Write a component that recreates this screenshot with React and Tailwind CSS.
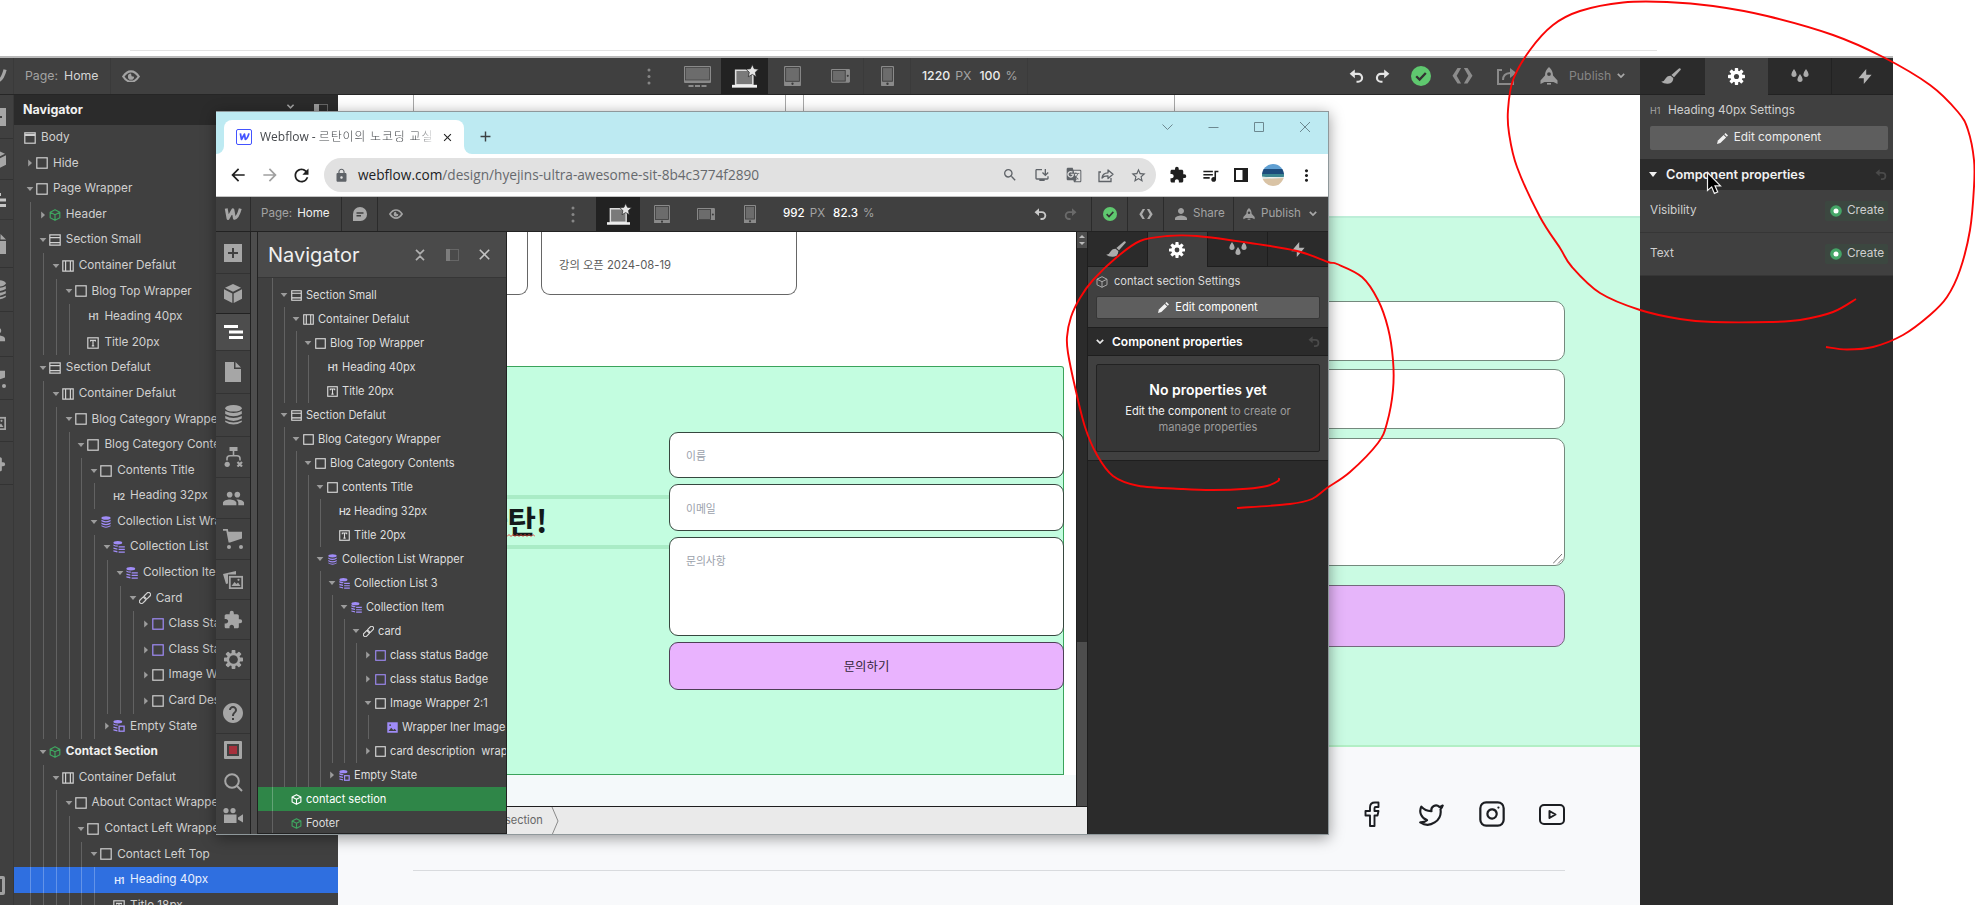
import React from "react";
import {
  MdArrowBack,
  MdArrowForward,
  MdRefresh,
  MdLock,
  MdSearch,
  MdOutlineInstallDesktop,
  MdGTranslate,
  MdStarBorder,
  MdExtension,
  MdQueueMusic,
  MdMoreVert,
  MdClose,
  MdAdd,
  MdPeople,
  MdHelp,
  MdPerson,
  MdUnfoldLess,
} from "react-icons/md";
import { Twitter, Instagram } from "lucide-react";

/* ---------- tree data ---------- */
// [depth, icon, label, arrow, mark]
const outerTree = [
  [-1, "body", "Body", ""],
  [0, "box", "Hide", "right"],
  [0, "box", "Page Wrapper", "down"],
  [1, "cube", "Header", "right"],
  [1, "section", "Section Small", "down"],
  [2, "container", "Container Defalut", "down"],
  [3, "box", "Blog Top Wrapper", "down"],
  [4, "h1", "Heading 40px", ""],
  [4, "text", "Title 20px", ""],
  [1, "section", "Section Defalut", "down"],
  [2, "container", "Container Defalut", "down"],
  [3, "box", "Blog Category Wrapper", "down"],
  [4, "box", "Blog Category Contents", "down"],
  [5, "box", "Contents Title", "down"],
  [6, "h2", "Heading 32px", ""],
  [5, "db", "Collection List Wrapper", "down"],
  [6, "list", "Collection List", "down"],
  [7, "list", "Collection Item", "down"],
  [8, "link", "Card", "down"],
  [9, "pbox", "Class Status Badge", "right"],
  [9, "pbox", "Class Status Badge", "right"],
  [9, "box", "Image Wrapper", "right"],
  [9, "box", "Card Description", "right"],
  [6, "empty", "Empty State", "right"],
  [1, "cube", "Contact Section", "down", "bold"],
  [2, "container", "Container Defalut", "down"],
  [3, "box", "About Contact Wrapper", "down"],
  [4, "box", "Contact Left Wrapper", "down"],
  [5, "box", "Contact Left Top", "down"],
  [6, "h1", "Heading 40px", "", "blue"],
  [6, "text", "Title 18px", ""],
];

const innerTree = [
  [1, "section", "Section Small", "down"],
  [2, "container", "Container Defalut", "down"],
  [3, "box", "Blog Top Wrapper", "down"],
  [4, "h1", "Heading 40px", ""],
  [4, "text", "Title 20px", ""],
  [1, "section", "Section Defalut", "down"],
  [2, "box", "Blog Category Wrapper", "down"],
  [3, "box", "Blog Category Contents", "down"],
  [4, "box", "contents Title", "down"],
  [5, "h2", "Heading 32px", ""],
  [5, "text", "Title 20px", ""],
  [4, "db", "Collection List Wrapper", "down"],
  [5, "list", "Collection List 3", "down"],
  [6, "list", "Collection Item", "down"],
  [7, "link", "card", "down"],
  [8, "pbox", "class status Badge", "right"],
  [8, "pbox", "class status Badge", "right"],
  [8, "box", "Image Wrapper 2:1", "down"],
  [9, "image", "Wrapper Iner Image", ""],
  [8, "box", "card description  wrap", "right"],
  [5, "empty", "Empty State", "right"],
  [1, "cube", "contact section", "", "green"],
  [1, "cube", "Footer", ""],
];

/* ---------- icons ---------- */
function NodeIcon({ type, size, active }) {
  if (type === "h1" || type === "h2") {
    return (
      <span className="text-[9px] leading-none font-semibold tracking-[-0.4px] text-center" style={{ width: size }}>
        {type === "h1" ? "H1" : "H2"}
      </span>
    );
  }
  const purple = "#a08cf8";
  const green = active ? "#ffffff" : "#3fa660";
  return (
    <svg width={size} height={size} viewBox="0 0 12 12" fill="none" stroke="currentColor" strokeWidth="1.2" className="shrink-0">
      {type === "box" && <rect x="0.8" y="0.8" width="10.4" height="10.4" />}
      {type === "pbox" && <rect x="0.8" y="0.8" width="10.4" height="10.4" stroke={purple} />}
      {type === "body" && (
        <>
          <rect x="0.8" y="0.8" width="10.4" height="10.4" />
          <path d="M0.8 2.4h10.4M0.8 3.4h10.4" strokeWidth="1.4" />
        </>
      )}
      {type === "section" && <path d="M0.8 0.8h10.4v10.4H0.8zM0.8 3.6h10.4M0.8 8.6h10.4" />}
      {type === "container" && <path d="M0.8 0.8h10.4v10.4H0.8zM3.6 0.8v10.4M8.4 0.8v10.4" />}
      {type === "text" && (
        <>
          <rect x="0.8" y="0.8" width="10.4" height="10.4" />
          <path d="M3.6 4.6v-1.3h4.8v1.3M6 3.3v5.6M4.8 8.9h2.4" />
        </>
      )}
      {type === "cube" && (
        <path d="M6 0.7l4.8 2.5v5.6L6 11.3 1.2 8.8V3.2zM1.2 3.2L6 5.7l4.8-2.5M6 5.7v5.6" stroke={green} strokeLinejoin="round" />
      )}
      {type === "db" && (
        <g fill={purple} stroke="none">
          <ellipse cx="6" cy="2" rx="4.6" ry="1.8" />
          <path d="M1.4 3.8q4.6 2.8 9.2 0v1.5q-4.6 2.6-9.2 0zM1.4 6.6q4.6 2.8 9.2 0v1.4q-4.6 2.6-9.2 0zM1.4 9.3q4.6 2.8 9.2 0v.9q-4.6 2.9-9.2 0z" />
        </g>
      )}
      {(type === "list" || type === "empty") && (
        <g fill={purple} stroke="none">
          <ellipse cx="4.8" cy="1.8" rx="4.4" ry="1.7" />
          <path d="M0.4 3.4q2 1.2 4.4 1.2v1.2q-2.6 0-4.4-1zM0.4 6.4l4 1v1.4l-4-1zM0.4 9.2l4 .8v1.4l-4-1z" />
          {type === "list" ? (
            <path d="M5.6 5.2h6.2v1.3H5.6zM5.6 7.8h6.2v1.3H5.6zM5.6 10.4h6.2v1.3H5.6z" />
          ) : (
            <rect x="6.1" y="6.2" width="5" height="5" fill="none" stroke={purple} strokeWidth="1.3" />
          )}
        </g>
      )}
      {type === "link" && (
        <g transform="rotate(-45 6 6)" strokeWidth="1.2">
          <rect x="-1" y="3.9" width="7.6" height="4.2" rx="2.1" />
          <rect x="5.4" y="3.9" width="7.6" height="4.2" rx="2.1" />
        </g>
      )}
      {type === "image" && (
        <>
          <rect x="0.3" y="0.3" width="11.4" height="11.4" fill={purple} stroke="none" />
          <path d="M1.6 9.8l3-3.6 2.2 2.4 1.6-1.2 2 2.4z" fill="#404040" stroke="none" />
          <circle cx="3.4" cy="3.4" r="1" fill="#404040" stroke="none" />
        </>
      )}
    </svg>
  );
}

function Arrow({ dir }) {
  return (
    <svg width="8" height="8" viewBox="0 0 8 8" className="-ml-1 shrink-0" fill="#9c9c9c">
      {dir === "down" && <path d="M0.6 2h6.8L4 6z" />}
      {dir === "right" && <path d="M2.2 0.6v6.8L6 4z" />}
    </svg>
  );
}

function WLogo({ width = 18, color = "#a6a6a6" }) {
  return (
    <svg width={width} height={width * 0.72} viewBox="0 0 18 13" fill="none" stroke={color} className="shrink-0">
      <path d="M2.2 0.6L4 10.600 8.900 1.800 10.400 10.400Q14 9.500 16.300 0.600" strokeWidth="2.900" strokeLinejoin="round" />
    </svg>
  );
}

function Eye({ size = 14 }) {
  return (
    <svg width={size} height={size * 0.72} viewBox="0 0 18 13" fill="none">
      <path d="M1.200 6.500Q4.500 1.300 9 1.300t7.800 5.200Q13.500 11.700 9 11.700T1.200 6.500z" stroke="#a3a3a3" strokeWidth="2.200" />
      <path d="M9 3.600a3.100 3.100 0 1 0 3.100 3.100L9.600 6.200z" fill="#a3a3a3" />
    </svg>
  );
}

function Undo({ size = 14, color = "#c9c9c9", flip = false }) {
  return (
    <svg width={size} height={size} viewBox="0 0 14 14" fill="none" stroke={color} strokeWidth="2" className={flip ? "-scale-x-100" : ""}>
      <path d="M2.500 4.500h6a3.700 3.700 0 0 1 0 7.400H7" />
      <path d="M5.400 0.400v8.200L0.600 4.500z" fill={color} stroke="none" />
    </svg>
  );
}

function Laptop({ w = 24 }) {
  return (
    <svg width={w} height={w} viewBox="0 0 24 24" className="overflow-visible">
      <path d="M3.500 6h16.500v14H3.500z" fill="#7a7a7a" stroke="#dcdcdc" strokeWidth="1.500" />
      <path d="M0 20h24v2.700H0z" fill="#efefef" />
      <path
        d="M19.500 0.500l1.800 4 4.300.5-3.200 2.900.9 4.300-3.800-2.200-3.800 2.200.9-4.300-3.200-2.900 4.300-.5z"
        fill="#e6e6e6"
        stroke="#222"
        strokeWidth="0.700"
      />
    </svg>
  );
}

function Tablet({ w = 16 }) {
  return (
    <svg width={w} height={w * 1.18} viewBox="0 0 16 19">
      <rect width="16" height="19" rx="1" fill="#8a8a8a" />
      <rect x="1.500" y="1.500" width="13" height="13" fill="#6c6c6c" stroke="#3b3b3b" strokeWidth="0.800" />
      <circle cx="8" cy="16.800" r="1.100" fill="#3b3b3b" />
    </svg>
  );
}

function Landscape({ w = 18 }) {
  return (
    <svg width={w} height={w * 0.72} viewBox="0 0 18 13">
      <rect width="18" height="13" rx="1" fill="#8a8a8a" />
      <rect x="1.500" y="1.500" width="12" height="10" fill="#6c6c6c" stroke="#3b3b3b" strokeWidth="0.800" />
      <circle cx="15.900" cy="6.500" r="1" fill="#3b3b3b" />
    </svg>
  );
}

function Phone({ w = 12 }) {
  return (
    <svg width={w} height={w * 1.55} viewBox="0 0 12 18.500">
      <rect width="12" height="18.500" rx="1" fill="#8a8a8a" />
      <rect x="1.500" y="1.500" width="9" height="12.500" fill="#6c6c6c" stroke="#3b3b3b" strokeWidth="0.800" />
      <circle cx="6" cy="16.300" r="1.100" fill="#3b3b3b" />
    </svg>
  );
}

function Desktop() {
  return (
    <svg width="27" height="21" viewBox="0 0 27 21">
      <rect width="27" height="17" rx="1" fill="#8a8a8a" />
      <rect x="1.500" y="1.500" width="24" height="12.500" fill="#6c6c6c" stroke="#444" strokeWidth="0.800" />
      <path d="M4.500 20h5M11 20h5M17.500 20h5" stroke="#8a8a8a" strokeWidth="2" />
    </svg>
  );
}

function Check({ size = 14 }) {
  return (
    <svg width={size} height={size} viewBox="0 0 20 20">
      <circle cx="10" cy="10" r="10" fill="#5fc86f" />
      <path d="M5.200 10.200l3.400 3.400 6.200-6.600" fill="none" stroke="#333" strokeWidth="2.300" />
    </svg>
  );
}

function Code({ w = 15, color = "#ababab" }) {
  return (
    <svg width={w} height={w * 0.74} viewBox="0 0 21 15.500" fill={color}>
      <path d="M5.500 0h3.600L4.700 7.700l4.400 7.800H5.500L0.500 7.700zM15.500 0h-3.600l4.400 7.700-4.400 7.800h3.600l5-7.800z" />
    </svg>
  );
}

function Rocket({ w = 12 }) {
  return (
    <svg width={w} height={w} viewBox="0 0 18 18" fill="#9b9b9b">
      <path fillRule="evenodd" d="M9 0c3 2.500 3.800 5 4 8.500l4.500 5V17l-4-2H4.500l-4 2v-3.500l4.500-5C5.200 5 6 2.500 9 0zm0 5.200a1.900 1.900 0 1 0 0 3.800 1.900 1.900 0 0 0 0-3.800z" />
      <path d="M7 16h4v1.600H7z" />
    </svg>
  );
}

function Chevron({ w = 8, color = "#a8a8a8" }) {
  return (
    <svg width={w} height={w * 0.65} viewBox="0 0 8 5.200" fill="none" stroke={color} strokeWidth="1.700">
      <path d="M0.800 0.800L4 4l3.200-3.200" />
    </svg>
  );
}

function Dots() {
  return (
    <svg width="4" height="17" viewBox="0 0 4 17" fill="#868686">
      <circle cx="2" cy="2" r="1.500" />
      <circle cx="2" cy="8.500" r="1.500" />
      <circle cx="2" cy="15" r="1.500" />
    </svg>
  );
}

function Brush({ size = 20 }) {
  return (
    <svg width={size} height={size * 0.8} viewBox="0 0 20 16" fill="#ababab">
      <path d="M18.200 0.200q2 0 1.500 1.600L13 9.200l-2.600-2.300z" />
      <path d="M9.600 7.700l2.700 2.400q.2 5.400-5.400 5.600-4.200.2-6.700-2 3-.1 4-2.600 1.700-3.400 5.400-3.400z" />
    </svg>
  );
}

function Gear({ size = 16, color = "#fff", hole = 3 }) {
  const teeth = [0, 45, 90, 135];
  return (
    <svg width={size} height={size} viewBox="-10 -10 20 20" fill={color}>
      {teeth.map((t) => (
        <rect key={t} x="-2" y="-10" width="4" height="20" rx="0.800" transform={`rotate(${t})`} />
      ))}
      <circle r="7.200" />
      <circle r={hole} fill="#404040" />
    </svg>
  );
}

function Drops() {
  return (
    <svg width="18" height="14" viewBox="0 0 18 14" fill="#ababab">
      <path d="M3 0q2.600 3.500 2.600 5.300a2.600 2.600 0 0 1-5.200 0Q0.400 3.500 3 0zM9 5q2.600 3.500 2.600 5.300a2.600 2.600 0 0 1-5.200 0Q6.400 8.500 9 5zM15 0q2.600 3.500 2.600 5.300a2.600 2.600 0 0 1-5.200 0Q12.400 3.500 15 0z" />
    </svg>
  );
}

function Bolt() {
  return (
    <svg width="14" height="15" viewBox="0 0 14 15" fill="#b5b5b5">
      <path d="M8.200 0v5.700H13.600L5.800 15V9.200H0.400z" />
    </svg>
  );
}

function Pencil() {
  return (
    <svg width="11" height="11" viewBox="0 0 11 11" fill="#f2f2f2">
      <path d="M0 11l.9-3.400L6.600 1.900l2.500 2.500L3.400 10.100z" />
      <path d="M7.300 1.200L8.500 0 11 2.500 9.800 3.700z" />
    </svg>
  );
}

/* Left toolbar glyphs, shared by both designer windows */
const railIcons = {
  add: (
    <svg width="18" height="18" viewBox="0 0 18 18">
      <rect width="18" height="18" fill="#a6a6a6" />
      <path d="M9 4v10M4 9h10" stroke="#404040" strokeWidth="2" />
    </svg>
  ),
  cube: (
    <svg width="18" height="19" viewBox="0 0 18 19" fill="#a6a6a6">
      <path d="M9 0l8 3.800-8 4-8-4zM0 5.300l8.300 4.200V19L0 14.800zM18 5.300L9.700 9.500V19l8.300-4.200z" />
    </svg>
  ),
  nav: (
    <svg width="19" height="14" viewBox="0 0 19 14" fill="#fff">
      <path d="M0 0h14v3H0zM5 5.500h14v3H5zM5 11h14v3H5z" />
    </svg>
  ),
  page: (
    <svg width="16" height="20" viewBox="0 0 16 20" fill="#a6a6a6">
      <path d="M0 0h9v7h7v13H0zM10.500 0L16 5.500h-5.500z" />
    </svg>
  ),
  db: (
    <svg width="17" height="20" viewBox="0 0 17 20" fill="#a6a6a6">
      <ellipse cx="8.500" cy="3.300" rx="8.300" ry="3.300" />
      <path d="M.2 6q8.300 4 16.600 0v3q-8.300 4.600-16.600 0zM.2 11q8.300 4 16.600 0v2.600q-8.300 4.600-16.600 0zM.2 15.500q8.300 4 16.600 0v1.500q-8.300 5-16.600 0z" />
    </svg>
  ),
  tree: (
    <svg width="19" height="20" viewBox="0 0 19 20" fill="none" stroke="#a6a6a6" strokeWidth="1.600">
      <path d="M5.500 0h8v4h-8z" fill="#a6a6a6" stroke="none" />
      <path d="M9.500 4v5M3 13.500v-2q0-2.700 3-2.700h7q3 0 3 2.700v2" />
      <circle cx="3.200" cy="17.300" r="2.600" fill="#a6a6a6" stroke="none" />
      <path d="M13.500 15l4.500 4.500M18 15l-4.500 4.500" strokeWidth="2.200" />
    </svg>
  ),
  people: <MdPeople size={23} color="#a6a6a6" />,
  cart: (
    <svg width="20" height="20" viewBox="0 0 20 20" fill="#a6a6a6">
      <path d="M0 0h4.800l.6 2.800H19v6.700L7 13.500H5.600L3.300 1.800H0z" />
      <circle cx="6" cy="18" r="2" />
      <circle cx="18" cy="18" r="2" />
    </svg>
  ),
  images: (
    <svg width="20" height="18" viewBox="0 0 20 18">
      <path d="M0 3l13-3v3.500H5v9l-2 .5z" fill="#a6a6a6" />
      <rect x="6.800" y="5.800" width="12.400" height="11.400" fill="none" stroke="#a6a6a6" strokeWidth="1.800" />
      <path d="M8.500 15l3-4 2 2 1.500-1.500 2.500 3.500z" fill="#a6a6a6" />
      <circle cx="15.500" cy="8.800" r="1.100" fill="#a6a6a6" />
    </svg>
  ),
  puzzle: <MdExtension size={20} color="#a6a6a6" />,
  gear: <Gear size={19} color="#a6a6a6" hole={4.6} />,
};

/* ---------- shared pieces ---------- */
function Tree({ rows, large }) {
  const step = large ? 12.85 : 12;
  return rows.map(([depth, icon, label, arrow, mark], i) => (
    <div
      key={i}
      className={`flex items-center shrink-0 whitespace-pre overflow-hidden ${
        large ? "h-[25.6px] pl-4 text-[11.75px] text-[#d0d0d0]" : "h-6 pl-[14px] text-[11.05px] text-[#dedede]"
      } ${mark === "blue" ? "bg-[#2f6fe0] text-[#e8f0ff]" : ""} ${mark === "green" ? "bg-[#2f8648] text-white" : ""}`}
    >
      {Array.from({ length: Math.max(depth, 0) }, (_, g) => (
        <span
          key={g}
          className={`self-stretch shrink-0 border-l ${mark === "blue" || mark === "green" ? "border-white/25" : "border-[#626262]"}`}
          style={{ width: step }}
        />
      ))}
      <span className="flex items-center" style={{ marginLeft: depth < 0 ? -12 : 0 }}>
        <Arrow dir={arrow} />
        <span className={`flex items-center ${large ? "ml-[2px] mr-[5px]" : "ml-[3px] mr-1"}`}>
          <NodeIcon type={icon} size={large ? 12 : 11} active={mark === "green"} />
        </span>
        <span className={mark === "bold" ? "font-bold text-[#f0f0f0]" : ""}>{label}</span>
      </span>
    </div>
  ));
}

function Rail({ cells, className }) {
  return cells.map(([name, cls]) => (
    <div key={name} className={`flex items-center shrink-0 border-b border-[#333] ${className} ${cls}`}>
      <span className="shrink-0">{railIcons[name]}</span>
    </div>
  ));
}

/* ---------- background designer ---------- */
function OuterTopBar() {
  return (
    <div className="flex h-[37px] shrink-0 items-stretch border-b border-[#262626] bg-[#404040] text-[12.3px] text-[#a3a3a3] [&>div]:flex [&>div]:items-center">
      <div className="w-[14px] justify-end overflow-hidden border-r border-[#3a3a3a] pr-[6px]">
        <WLogo width={20} />
      </div>
      <div className="w-[97px] gap-[6px] border-r border-[#3a3a3a] pl-[11px]">
        Page: <span className="text-[#d6d6d6]">Home</span>
      </div>
      <div className="w-[39px] justify-center">
        <Eye size={18} />
      </div>
      <div className="ml-[487px] w-6 justify-center">
        <Dots />
      </div>
      <div className="ml-3 w-12 justify-center">
        <Desktop />
      </div>
      <div className="w-[47px] justify-center bg-[#222]">
        <Laptop w={25} />
      </div>
      <div className="w-[49px] justify-center">
        <Tablet w={17} />
      </div>
      <div className="w-[46px] justify-center">
        <Landscape w={19} />
      </div>
      <div className="w-12 justify-center border-x border-[#3b3b3b]">
        <Phone w={13} />
      </div>
      <div className="w-[117px] gap-[5px] border-r border-[#3b3b3b] pl-[11px]">
        <span className="font-medium text-[#ececec]">1220</span>PX
        <span className="ml-[3px] font-medium text-[#ececec]">100</span>%
      </div>
      <div className="ml-auto w-[26px] justify-center">
        <Undo size={15} color="#e4e4e4" />
      </div>
      <div className="w-[31px] pl-[6px]">
        <Undo size={15} color="#e4e4e4" flip />
      </div>
      <div className="w-[41px] justify-center">
        <Check size={20} />
      </div>
      <div className="w-[43px] justify-center">
        <Code w={21} color="#8c8c8c" />
      </div>
      <div className="w-[45px] justify-center">
        <svg width="20" height="17" viewBox="0 0 20 17" fill="none" stroke="#8a8a8a" strokeWidth="2">
          <path d="M5 2H1v14h15v-4" />
          <path d="M6 12q0-6.500 7-7" />
          <path d="M13 0l6.500 5-6.500 5z" fill="#8a8a8a" stroke="none" />
        </svg>
      </div>
      <div className="w-[111px] pl-[11px] text-[#858585]">
        <Rocket w={18} />
        <span className="ml-[11px]">Publish</span>
        <span className="ml-[6px]">
          <Chevron />
        </span>
      </div>
    </div>
  );
}

function OuterNavigator() {
  return (
    <div className="flex shrink-0 overflow-hidden">
      <div className="w-[14px] overflow-hidden border-r border-[#383838] bg-[#404040]">
        <Rail
          className="w-[14px] justify-end pr-2"
          cells={[
            ["add", "h-[44px]"],
            ["cube", "h-[41px]"],
            ["nav", "h-[40px] opacity-70"],
            ["page", "h-[48px]"],
            ["db", "h-[44px]"],
            ["people", "h-[45px]"],
            ["cart", "h-[43px]"],
            ["images", "h-[42px]"],
            ["puzzle", "h-[43px]"],
          ]}
        />
        <div className="mt-[391px] ml-[-14px] h-[19px] w-[19px] rounded-[2px] border-[3px] border-[#a0a0a0] bg-[#404040]" />
      </div>
      <div className="w-[324px] overflow-hidden bg-[#404040]">
        <div className="flex h-[30px] items-center bg-[#2b2b2b] pr-[10px] pl-[9px]">
          <span className="text-[12.5px] font-bold text-[#f2f2f2]">Navigator</span>
          <MdUnfoldLess size={19} className="mr-[14px] ml-auto" color="#a3a3a3" />
          <svg width="14" height="12" viewBox="0 0 14 12">
            <rect x="0.500" y="0.500" width="13" height="11" fill="none" stroke="#666" />
            <rect width="5" height="12" fill="#9a9a9a" />
          </svg>
        </div>
        <div className="flex flex-col">
          <Tree rows={outerTree} large />
        </div>
      </div>
    </div>
  );
}

function FooterIcons() {
  return (
    <div className="flex items-center justify-end pr-[75px] text-[#1c1e22]">
      <svg width="16" height="26" viewBox="0 0 16 26" fill="none" stroke="currentColor" strokeWidth="1.900" strokeLinejoin="round">
        <path d="M14.500 1.500H11Q6 1.500 6 6.500V10H1.500v4.500H6V25h4.500V14.500h3l1-4.500h-4V7.200q0-1.200 1.200-1.200h2.800z" />
      </svg>
      <Twitter size={27} strokeWidth={1.9} className="ml-[38px]" />
      <Instagram size={28} strokeWidth={1.9} className="ml-[33px]" />
      <svg width="26" height="21" viewBox="0 0 26 21" fill="none" stroke="currentColor" strokeWidth="2" strokeLinejoin="round" className="ml-[33px]">
        <rect x="1" y="1" width="24" height="19" rx="4" />
        <path d="M10.500 7l6 3.500-6 3.500z" />
      </svg>
    </div>
  );
}

function OuterCanvas() {
  return (
    <div className="flex flex-1 flex-col bg-white">
      <div className="flex h-[121px] items-start [&>div]:h-full [&>div]:border-[#a8a8a8]">
        <div className="ml-[75px] w-[373px] border-x" />
        <div className="ml-[17px] w-[372px] border-x" />
      </div>
      <div className="flex h-[531px] flex-col items-end border-t-2 border-b-2 border-t-[#bdeed8] border-b-[#b2efc5] bg-[#cafbe3] pr-[75px] pt-[83px]">
        <div className="h-[60px] w-[600px] rounded-[10px] border border-[#74897d] bg-white" />
        <div className="mt-2 h-[60px] w-[600px] rounded-[10px] border border-[#74897d] bg-white" />
        <div className="mt-[9px] flex h-[128px] w-[600px] items-end justify-end rounded-[10px] border border-[#74897d] bg-white p-px">
          <svg width="10" height="10" viewBox="0 0 10 10" stroke="#777">
            <path d="M0 9.500L9 0M5 9.500L9.500 5" />
          </svg>
        </div>
        <div className="mt-[19px] h-[62px] w-[600px] rounded-[10px] border border-[#74697d] bg-[#e6b5fa]" />
      </div>
      <div className="flex-1 bg-[#f8f9fb] pt-[53px]">
        <FooterIcons />
        <div className="mt-[42px] mr-[75px] ml-[75px] h-px bg-[#d9dbde]" />
      </div>
    </div>
  );
}

function OuterPanel() {
  return (
    <div className="flex w-[253px] shrink-0 flex-col bg-[#2b2b2b] text-[#cfcfcf]">
      <div className="flex h-[37px] [&>div]:flex [&>div]:items-center [&>div]:justify-center [&>div]:border-[#222]">
        <div className="w-[65px] border-b pr-1">
          <Brush />
        </div>
        <div className="w-[63px] bg-[#404040] pr-px">
          <Gear size={17} />
        </div>
        <div className="w-[64px] border-r border-b">
          <Drops />
        </div>
        <div className="flex-1 border-b pl-1">
          <Bolt />
        </div>
      </div>
      <div className="h-[64px] bg-[#404040] pr-[5px] pl-[10px]">
        <div className="flex h-[31px] items-center text-[11.8px]">
          <span className="w-[18px] text-[9px] text-[#a5a5a5]">H1</span>
          Heading 40px Settings
        </div>
        <div className="flex h-6 items-center justify-center gap-[6px] rounded-[2px] bg-[#5e5e5e] text-[11.8px] text-[#ededed]">
          <Pencil />
          Edit component
        </div>
      </div>
      <div className="flex h-[31px] items-center bg-[#2b2b2b] pr-[6px] pl-[9px]">
        <svg width="8" height="5" viewBox="0 0 8 5" fill="#f0f0f0">
          <path d="M0 0h8L4 5z" />
        </svg>
        <span className="ml-[9px] text-[12.75px] font-semibold text-[#f2f2f2]">Component properties</span>
        <span className="ml-auto">
          <Undo size={12} color="#4a4a4a" />
        </span>
      </div>
      {["Visibility", "Text"].map((label) => (
        <div key={label} className="flex h-[43px] items-center justify-between border-b border-[#363636] bg-[#404040] pr-[5px] pl-[10px] text-[11.8px]">
          {label}
          <span className="flex h-5 w-[63px] items-center gap-[5px] rounded-[2px] bg-[#3c4740] pl-[5px]">
            <svg width="12" height="12" viewBox="0 0 12 12">
              <circle cx="6" cy="6" r="5.800" fill="#45a567" />
              <circle cx="6" cy="6" r="2.500" fill="#fff" />
            </svg>
            Create
          </span>
        </div>
      ))}
    </div>
  );
}

/* ---------- browser window in front ---------- */
function BrowserChrome() {
  return (
    <>
      <div className="flex h-[42px] shrink-0 bg-[#bdeaf2]">
        <span className="h-2 w-2 self-end bg-white">
          <span className="block h-2 w-2 rounded-br-lg bg-[#bdeaf2]" />
        </span>
        <div className="mt-2 flex w-[240px] items-center rounded-t-lg bg-white pl-3 font-['Open_Sans','Noto_Sans_CJK_KR',sans-serif]">
          <span className="flex h-4 w-4 shrink-0 items-center justify-center rounded-[2px] border border-[#4353ff]">
            <WLogo width={11} color="#4353ff" />
          </span>
          <span className="ml-2 w-[177px] overflow-hidden text-[12px] whitespace-nowrap text-[#45484c] [mask-image:linear-gradient(to_right,black_88%,transparent)]">
            Webflow - <span className="font-light tracking-[0.8px]">르탄이의 노코딩 교실</span>
          </span>
          <MdClose size={13} className="ml-1 shrink-0" color="#222" />
        </div>
        <span className="h-2 w-2 self-end bg-white">
          <span className="block h-2 w-2 rounded-bl-lg bg-[#bdeaf2]" />
        </span>
        <MdAdd size={17} className="mt-[16px] ml-[5px]" color="#3c4043" />
        <svg width="150" height="12" viewBox="0 0 150 12" fill="none" stroke="#6d8890" className="mt-[9px] mr-[17px] ml-auto">
          <path d="M1.500 3.500l5 5 5-5" />
          <path d="M47.500 6.500h10" />
          <path d="M93.500 1.500h9v9h-9z" />
          <path d="M139 1l10 10M149 1l-10 10" />
        </svg>
      </div>
      <div className="flex h-[43px] shrink-0 items-center border-b border-[#c4c4c4] bg-white font-['Open_Sans',sans-serif]">
        <MdArrowBack size={20} className="ml-3" color="#1f1f1f" />
        <MdArrowForward size={20} className="ml-3" color="#a0a0a0" />
        <MdRefresh size={21} className="ml-[11px]" color="#1f1f1f" />
        <div className="ml-3 flex h-[34px] w-[832px] items-center rounded-full bg-[#e1e1e1] pl-[10px]">
          <MdLock size={15} color="#5f6368" />
          <span className="ml-[9px] text-[13.65px] text-[#66696d]">
            <span className="text-[#202124]">webflow.com</span>/design/hyejins-ultra-awesome-sit-8b4c3774f2890
          </span>
          <span className="mr-[9px] ml-auto flex items-center gap-4 text-[#5f6368]">
            <MdSearch size={16} />
            <MdOutlineInstallDesktop size={16} />
            <MdGTranslate size={16} />
            <svg width="16" height="16" viewBox="0 0 16 16" fill="none" stroke="currentColor" strokeWidth="1.300">
              <path d="M3 5H1v9.500h12V11" />
              <path d="M4 11q.5-5 6-5.200V3l5 4.300-5 4.300V8.800Q6 8.600 4 11z" strokeLinejoin="round" />
            </svg>
            <MdStarBorder size={17} />
          </span>
        </div>
        <div className="flex items-center gap-[14px] pl-[13px]">
          <MdExtension size={18} color="#1f1f1f" />
          <MdQueueMusic size={19} color="#1f1f1f" />
          <svg width="14" height="14" viewBox="0 0 14 14">
            <rect x="1" y="1" width="12" height="12" fill="none" stroke="#1f1f1f" strokeWidth="2" />
            <rect x="8.500" width="5.500" height="14" fill="#1f1f1f" />
          </svg>
          <svg width="22" height="22" viewBox="0 0 22 22">
            <clipPath id="avatar">
              <circle cx="11" cy="11" r="11" />
            </clipPath>
            <g clipPath="url(#avatar)">
              <path d="M0 0h22v6H0z" fill="#5f9fd2" />
              <path d="M0 5h22v6H0z" fill="#1d4c7c" />
              <path d="M0 10h22v3H0z" fill="#3d8791" />
              <path d="M0 12.500l8 1 14-.5v3H0z" fill="#dfe8e4" />
              <path d="M0 15l22-1v8H0z" fill="#d9c3a5" />
            </g>
          </svg>
          <MdMoreVert size={19} className="-ml-px" color="#1f1f1f" />
        </div>
      </div>
    </>
  );
}

function InnerTopBar() {
  return (
    <div className="flex h-[35px] shrink-0 items-stretch border-b border-[#222] bg-[#404040] text-[11.6px] text-[#a3a3a3] [&>div]:flex [&>div]:items-center [&>div]:border-[#2b2b2b]">
      <div className="w-[35px] justify-center border-r">
        <WLogo width={18} />
      </div>
      <div className="w-[91px] gap-[5px] border-r pl-[10px]">
        Page: <span className="text-[#f0f0f0]">Home</span>
      </div>
      <div className="w-9 justify-center border-r">
        <svg width="14" height="14" viewBox="0 0 14 14">
          <path d="M7 0a7 7 0 0 1 7 7v.5A6.500 6.500 0 0 1 7.500 14H0V7a7 7 0 0 1 7-7z" fill="#a8a8a8" />
          <path d="M3.500 6h7M3.500 8.800h4.500" stroke="#404040" strokeWidth="1.400" />
        </svg>
      </div>
      <div className="w-9 justify-center">
        <Eye size={14} />
      </div>
      <div className="ml-[147px] w-6 justify-center">
        <Dots />
      </div>
      <div className="ml-[11px] w-11 justify-center bg-[#222]">
        <Laptop w={23} />
      </div>
      <div className="w-11 justify-center">
        <Tablet w={16} />
      </div>
      <div className="w-11 justify-center">
        <Landscape w={18} />
      </div>
      <div className="w-11 justify-center">
        <Phone w={12} />
      </div>
      <div className="gap-[5px] pl-[11px]">
        <span className="font-medium text-white">992</span>PX
        <span className="ml-[3px] font-medium text-white">82.3</span>%
      </div>
      <div className="ml-auto w-7 pl-[6px]">
        <Undo size={13} />
      </div>
      <div className="w-9 border-r pl-2">
        <Undo size={13} color="#6a6a6a" flip />
      </div>
      <div className="w-9 justify-center border-r">
        <Check size={14} />
      </div>
      <div className="w-9 justify-center border-r">
        <Code w={14} />
      </div>
      <div className="w-[70px] border-r pl-[8px]">
        <MdPerson size={18} color="#a0a0a0" />
        <span className="ml-[3px]">Share</span>
      </div>
      <div className="w-[94px] pl-[9px]">
        <Rocket w={12} />
        <span className="ml-[6px]">Publish</span>
        <span className="ml-2">
          <Chevron />
        </span>
      </div>
    </div>
  );
}

function InnerNavigator() {
  return (
    <>
      <div className="flex w-[35px] shrink-0 flex-col border-r border-[#222] bg-[#404040]">
        <Rail
          className="w-full justify-center"
          cells={[
            ["add", "h-[42px]"],
            ["cube", "h-[40px] border-b-[#222]"],
            ["nav", "h-[37px] bg-[#4d4d4d]"],
            ["page", "h-[43px]"],
            ["db", "h-[43px]"],
            ["tree", "h-[41px]"],
            ["people", "h-[41px]"],
            ["cart", "h-[41px]"],
            ["images", "h-[40px]"],
            ["puzzle", "h-[40px]"],
            ["gear", "h-[40px]"],
          ]}
        />
        <div className="flex h-[54px] items-center justify-center border-b border-[#333] pt-3">
          <MdHelp size={24} color="#a6a6a6" />
        </div>
        <div className="mx-auto mt-[7px] flex h-[18px] w-[18px] shrink-0 items-center justify-center rounded-[1px] border-[3px] border-[#a6a6a6]">
          <span className="h-2 w-2 bg-[#a5303c]" />
        </div>
        <svg width="19" height="19" viewBox="0 0 19 19" fill="none" stroke="#a6a6a6" strokeWidth="2" className="mx-auto mt-[14px] shrink-0">
          <circle cx="8" cy="8" r="6.800" />
          <path d="M13 13l5 5" />
        </svg>
        <svg width="20" height="15" viewBox="0 0 20 15" fill="#a6a6a6" className="mx-auto mt-[16px] shrink-0">
          <circle cx="3" cy="2.600" r="2.600" />
          <circle cx="10" cy="2.600" r="2.600" />
          <path d="M1 6.500h12.500V15H1zM15 9.500l5-3.300v8.300l-5-3z" />
        </svg>
      </div>
      <div className="w-[6px] shrink-0 bg-[#4d4d4d]" />
      <div className="flex w-[250px] shrink-0 flex-col overflow-hidden border-r border-b border-l border-[#222] bg-[#404040]">
        <div className="flex h-[46px] shrink-0 items-center border-b border-[#363636] bg-[#4a4a4a] pr-[16px] pl-[10px]">
          <span className="text-[20px] text-[#f0f0f0]">Navigator</span>
          <svg width="10" height="12" viewBox="0 0 10 12" fill="none" stroke="#b0b0b0" strokeWidth="1.700" className="ml-auto">
            <path d="M1 0.800l4 4 4-4M1 11.200l4-4 4 4" />
          </svg>
          <svg width="13" height="12" viewBox="0 0 13 12" className="ml-[21px]">
            <rect x="0.500" y="0.500" width="12" height="11" fill="none" stroke="#666" />
            <rect width="4" height="12" fill="#7c7c7c" />
          </svg>
          <svg width="11" height="11" viewBox="0 0 11 11" stroke="#c4c4c4" strokeWidth="1.600" className="ml-5">
            <path d="M0.800 0.800l9.400 9.400M10.200 0.800L0.800 10.200" />
          </svg>
        </div>
        <div className="h-[5px] shrink-0 pl-[14px]">
          <span className="block h-full border-l border-[#626262]" />
        </div>
        <Tree rows={innerTree} />
      </div>
    </>
  );
}

function ContactForm() {
  const fields = [
    ["이름", "h-[46px] items-center"],
    ["이메일", "h-[47px] items-center mt-[6px]"],
    ["문의사항", "h-[99px] items-start pt-[14px] mt-[6px]"],
  ];
  return (
    <div className="w-[395px] shrink-0 pt-[65px] font-['Noto_Sans_CJK_KR',sans-serif]">
      {fields.map(([label, cls]) => (
        <div key={label} className={`flex rounded-[9px] border border-[#37473f] bg-white pl-4 text-[10.8px] leading-4 text-[#9ba1ab] ${cls}`}>
          {label}
        </div>
      ))}
      <div className="mt-[6px] flex h-[48px] items-center justify-center rounded-[9px] border border-[#4d3f55] bg-[#e9b3fe] text-[12.4px] text-[#33263a]">
        문의하기
      </div>
    </div>
  );
}

function InnerCanvas() {
  return (
    <div className="flex w-[580px] shrink-0 flex-col bg-white">
      <div className="flex h-[574px] overflow-hidden">
        <div className="flex w-[569px] flex-col overflow-hidden">
          <div className="flex h-[134px] shrink-0 items-start">
            <div className="h-[63px] w-[21px] rounded-br-[9px] border-r border-b border-[#666]" />
            <div className="ml-[13px] h-[63px] w-[256px] rounded-b-[9px] border-x border-b border-[#666] pt-[25px] pl-[17px] font-['Inter','Noto_Sans_CJK_KR',sans-serif] text-[11.3px] leading-4 text-[#5a5a5a]">
              강의 오픈 2024-08-19
            </div>
          </div>
          <div className="flex h-[409px] w-[557px] shrink-0 rounded-tr-[3px] border-y border-r border-[#3aa35b] bg-[#c3fde0]">
            <div className="w-[162px] shrink-0 pt-[128px]">
              <div className="flex h-[54px] flex-col overflow-hidden border-y-[4px] border-[#a9ecc6] font-['Noto_Sans_CJK_KR',sans-serif]">
                <span className="mt-[5px] -ml-[28px] text-[31px] leading-[31px] font-bold whitespace-nowrap text-[#14191a]">하탄!</span>
                <svg width="28" height="3" viewBox="0 0 28 3" fill="none" stroke="#e0483f" className="-mt-[1px] shrink-0">
                  <path d="M0 2.500l2-2 2 2 2-2 2 2 2-2 2 2 2-2 2 2 2-2 2 2 2-2 2 2 2-2 2 2" />
                </svg>
              </div>
            </div>
            <ContactForm />
          </div>
          <div className="flex-1 bg-[#f4f9fa]" />
        </div>
        <div className="flex w-[11px] flex-col border-l border-[#1e1e1e] bg-[#2b2b2b]">
          <div className="flex h-4 flex-col items-center justify-between bg-[#4d4d4d] py-[3px]">
            <svg width="6" height="3" viewBox="0 0 6 3" fill="#bbb">
              <path d="M0 3h6L3 0z" />
            </svg>
            <svg width="6" height="3" viewBox="0 0 6 3" fill="#bbb">
              <path d="M0 0h6L3 3z" />
            </svg>
          </div>
          <div className="mt-auto h-[164px] bg-[#4d4d4d]" />
        </div>
      </div>
      <div className="flex flex-1 items-stretch overflow-hidden border-t border-[#1e1e1e] bg-[#eaeaea] text-[11px] text-[#666]">
        <span className="-ml-[2px] self-center">section</span>
        <svg width="8" height="28" viewBox="0 0 8 28" fill="none" stroke="#8a8a8a" className="ml-2">
          <path d="M1 0l6 14-6 14" />
        </svg>
      </div>
    </div>
  );
}

function InnerPanel() {
  return (
    <div className="flex flex-1 flex-col border-l border-[#1e1e1e] bg-[#2b2b2b] text-[11.1px] text-[#dcdcdc]">
      <div className="flex h-[35px] shrink-0 [&>div]:flex [&>div]:items-center [&>div]:justify-center [&>div]:border-[#1e1e1e]">
        <div className="w-[60px] border-r border-b pr-1">
          <Brush />
        </div>
        <div className="w-[59px] bg-[#404040] pr-px">
          <Gear size={16} />
        </div>
        <div className="w-[61px] border-r border-b border-l">
          <Drops />
        </div>
        <div className="flex-1 border-b">
          <Bolt />
        </div>
      </div>
      <div className="h-[60px] shrink-0 bg-[#404040] px-2">
        <div className="flex h-[29px] items-center">
          <svg width="12" height="12" viewBox="0 0 12 12" fill="none" stroke="#a8a8a8" className="mr-[6px]">
            <path d="M6 0.700l5 2.500v5.600L6 11.300 1 8.800V3.200zM1 3.200L6 5.700l5-2.500M6 5.700v5.600" />
          </svg>
          contact section Settings
        </div>
        <div className="flex h-[23px] items-center justify-center gap-[6px] rounded-[2px] border border-[#363636] bg-[#5e5e5e] text-white">
          <Pencil />
          Edit component
        </div>
      </div>
      <div className="flex h-[29px] shrink-0 items-center border-y border-[#1e1e1e] pr-[8px] pl-2">
        <Chevron color="#e8e8e8" />
        <span className="ml-2 text-[12px] font-semibold text-white">Component properties</span>
        <span className="ml-auto">
          <Undo size={12} color="#4a4a4a" />
        </span>
      </div>
      <div className="h-[105px] shrink-0 border-b border-[#1e1e1e] bg-[#404040] p-2">
        <div className="h-[88px] rounded-[2px] border border-[#222] bg-[#363636] pt-[15px] text-center">
          <div className="text-[14px] leading-5 font-semibold text-white">No properties yet</div>
          <div className="mt-[3px] leading-4 text-[#9d9d9d]">
            <span className="text-[#f2f2f2]">Edit the component</span> to create or
            <br />
            manage properties
          </div>
        </div>
      </div>
    </div>
  );
}

function BrowserWindow() {
  return (
    <div className="absolute top-[111px] left-[216px] flex h-[724px] w-[1113px] flex-col border-t border-r border-b border-[#8f989b] shadow-[0_3px_14px_rgba(0,0,0,0.4)]">
      <BrowserChrome />
      <InnerTopBar />
      <div className="flex flex-1 overflow-hidden bg-[#404040]">
        <InnerNavigator />
        <InnerCanvas />
        <InnerPanel />
      </div>
    </div>
  );
}

/* ---------- pen marks ---------- */
const bigLoop = [
  [1856, 299], [1833, 312], [1800, 320], [1770, 322], [1713, 322], [1680, 319], [1640, 310], [1600, 293], [1572, 267],
  [1560, 248], [1540, 217], [1517, 167], [1509, 133], [1508, 110], [1513, 80], [1530, 50], [1553, 25], [1580, 11],
  [1623, 2.5], [1667, 2], [1713, 6], [1767, 16], [1833, 35], [1883, 57], [1930, 85], [1958, 112], [1968, 130],
  [1974, 160], [1974, 187], [1970, 230], [1960, 270], [1947, 297], [1930, 315], [1903, 335], [1873, 347], [1847, 349.5], [1826, 347],
];
const smallLoop = [
  [1279, 478], [1278, 481], [1267, 486], [1247, 488.7], [1213, 490], [1183, 489], [1138, 485.7], [1113, 476], [1097, 455],
  [1085, 427], [1075, 387], [1068, 353], [1067, 337], [1071, 317], [1080, 298], [1093, 280], [1117, 257], [1140, 241],
  [1167, 236], [1197, 236], [1250, 243], [1297, 251], [1328, 262], [1337, 264], [1362, 277], [1378, 300], [1388, 328],
  [1393, 360], [1393, 390], [1387, 423], [1378, 443], [1350, 472], [1327, 488], [1312, 499], [1290, 504], [1237, 508],
];

// Catmull-Rom through the points, written as cubic beziers
function smooth(pts) {
  let d = `M${pts[0].join(" ")}`;
  for (let i = 0; i < pts.length - 1; i++) {
    const a = pts[i - 1] || pts[i];
    const b = pts[i];
    const c = pts[i + 1];
    const e = pts[i + 2] || c;
    d += `C${b[0] + (c[0] - a[0]) / 6} ${b[1] + (c[1] - a[1]) / 6} ${c[0] - (e[0] - b[0]) / 6} ${c[1] - (e[1] - b[1]) / 6} ${c[0]} ${c[1]}`;
  }
  return d;
}

export default function App() {
  return (
    <div className="relative h-[905px] w-[1975px] overflow-hidden bg-white font-['Inter',sans-serif]">
      <div className="flex h-full w-[1893px] flex-col">
        <div className="h-[56px] pt-[50px]">
          <div className="ml-[130px] h-px w-[1527px] bg-[#e2e2e2]" />
        </div>
        <div className="h-[2px] shrink-0 bg-[#b9b9b9]" />
        <div className="flex flex-1 overflow-hidden">
          <div className="flex w-[1640px] flex-col">
            <OuterTopBar />
            <div className="flex flex-1 overflow-hidden">
              <OuterNavigator />
              <OuterCanvas />
            </div>
          </div>
          <OuterPanel />
        </div>
      </div>

      <BrowserWindow />

      <svg width="1975" height="905" viewBox="0 0 1975 905" fill="none" className="pointer-events-none absolute inset-0">
        <path d="M1707.500 172.500v18l4.200-3.600 2.700 6.500 3.300-1.400-2.700-6.200h5.500z" fill="#000" stroke="#f0f0f0" strokeWidth="1.200" />
        <path d={smooth(bigLoop)} stroke="#fa0606" strokeWidth="1.900" />
        <path d={smooth(smallLoop)} stroke="#fa0606" strokeWidth="1.900" />
      </svg>
    </div>
  );
}
